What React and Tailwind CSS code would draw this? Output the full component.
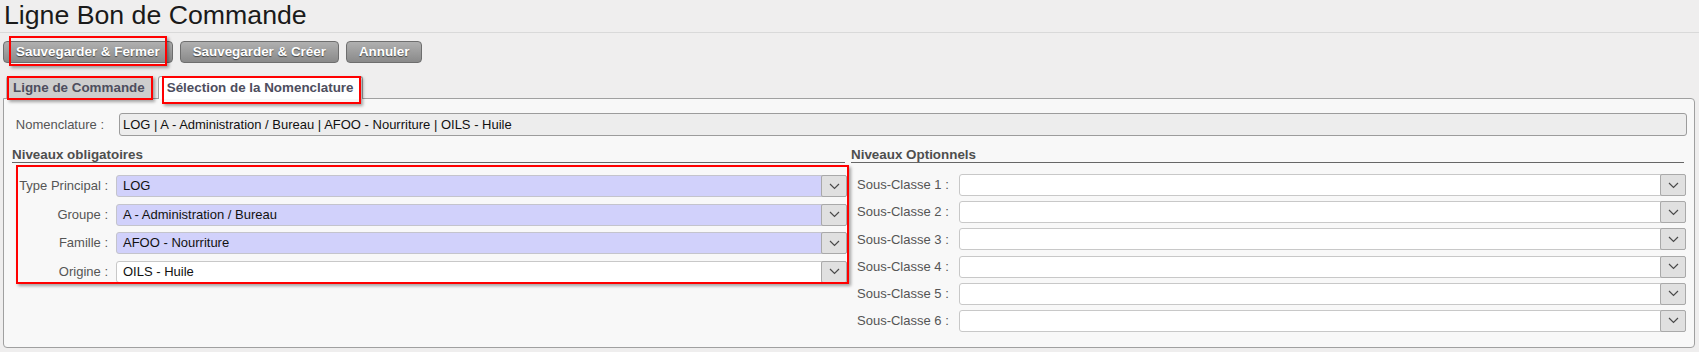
import React from "react";

const Chevron = () => (
  <svg width="11" height="7" viewBox="0 0 11 7" fill="none">
    <polyline points="1,1 5.5,5.5 10,1" stroke="#4a4a4a" strokeWidth="1.2" />
  </svg>
);

function Select({ value, blue }) {
  return (
    <div
      className={`flex flex-1 h-[22px] rounded-[3px] border ${
        blue ? "bg-[#d1d1fb] border-[#c4c4cc]" : "bg-white border-[#c8c8c8]"
      }`}
    >
      <div className="flex-1 pl-[6px] text-[13px] leading-[20px] text-[#111]">{value}</div>
      <div className="-my-px -mr-px w-[26px] flex items-center justify-center rounded-[2px] border border-[#a9a9a9] bg-[#e0e0e0]">
        <Chevron />
      </div>
    </div>
  );
}

const Btn = ({ children }) => (
  <button className="h-[22px] px-[12px] rounded-[4px] border border-[#6e6e6e] bg-gradient-to-b from-[#b0b0b0] to-[#8a8a8a] text-white font-bold text-[13.4px] leading-[20px] [text-shadow:0_1px_1px_rgba(0,0,0,0.55)]">
    {children}
  </button>
);

export default function App() {
  const left = [
    ["Type Principal :", "LOG", true],
    ["Groupe :", "A - Administration / Bureau", true],
    ["Famille :", "AFOO - Nourriture", true],
    ["Origine :", "OILS - Huile", false],
  ];
  const right = [1, 2, 3, 4, 5, 6];
  return (
    <div className="relative w-[1699px] h-[352px] overflow-hidden bg-[#efeeee] font-['Liberation_Sans',Arial,sans-serif]">
      {/* Title */}
      <div className="h-[33px] border-b border-[#d9d9d9] pl-[4px] text-[26.7px] leading-[30px] text-[#1a1a1a]">
        Ligne Bon de Commande
      </div>

      {/* Buttons */}
      <div className="mt-[8px] pl-[3px] flex gap-[7px]">
        <Btn>Sauvegarder &amp; Fermer</Btn>
        <Btn>Sauvegarder &amp; Créer</Btn>
        <Btn>Annuler</Btn>
      </div>

      {/* Tabs */}
      <div className="mt-[13px] pl-[6px] flex items-end gap-[6px] relative z-10">
        <div className="h-[22px] px-[6px] border border-[#b4b4b4] border-b-0 bg-[#cdcdcd] rounded-t-[3px] text-[13.4px] font-bold leading-[21px] text-[#4e4e5e]">
          Ligne de Commande
        </div>
        <div className="h-[23px] -mb-px px-[8px] border border-[#a0a0a0] border-b-0 bg-white rounded-t-[3px] text-[13.4px] font-bold leading-[21px] text-[#4e4e5e]">
          Sélection de la Nomenclature
        </div>
      </div>

      {/* Panel */}
      <div className="ml-[3px] w-[1692px] border border-[#a0a0a0] rounded-b-[4px] rounded-tr-[4px] bg-[#f8f8f8] pt-[14px] pb-[15px] pl-[8px] pr-[7px]">
        <div className="flex items-center h-[23px]">
          <div className="w-[96px] -ml-[4px] text-right text-[13px] text-[#555]">Nomenclature :</div>
          <div className="ml-[15px] flex-1 h-[23px] rounded-[3px] border border-[#9c9c9c] bg-[#ededed] pl-[3px] text-[13px] leading-[21px] text-[#111]">
            LOG | A - Administration / Bureau | AFOO - Nourriture | OILS - Huile
          </div>
        </div>

        <div className="mt-[11px] grid grid-cols-[835px_835px] gap-x-[4px]">
          <div>
            <div className="mr-[2px] border-b border-[#666] text-[13.4px] font-bold leading-[15px] text-[#4e4e4e]">
              Niveaux obligatoires
            </div>
            <div className="mt-[12px] flex flex-col gap-[6.5px]">
              {left.map(([label, value, blue]) => (
                <div key={label} className="flex items-center">
                  <div className="w-[96px] text-right text-[13px] text-[#555]">{label}</div>
                  <div className="ml-[8px] flex flex-1">
                    <Select value={value} blue={blue} />
                  </div>
                </div>
              ))}
            </div>
          </div>
          <div>
            <div className="mr-[2px] border-b border-[#666] text-[13.4px] font-bold leading-[15px] text-[#4e4e4e]">
              Niveaux Optionnels
            </div>
            <div className="mt-[11px] flex flex-col gap-[5.2px]">
              {right.map((n) => (
                <div key={n} className="flex items-center">
                  <div className="pl-[6px] w-[108px] text-[13px] text-[#555]">Sous-Classe {n} :</div>
                  <div className="flex flex-1">
                    <Select value="" blue={false} />
                  </div>
                </div>
              ))}
            </div>
          </div>
        </div>
      </div>

      {/* Red annotation boxes */}
      <div className="absolute left-[9px] top-[36px] w-[158px] h-[30px] border-2 border-[#ff0000] shadow-[2px_2px_3px_rgba(0,0,0,0.35)] z-20" />
      <div className="absolute left-[7px] top-[76px] w-[146px] h-[24px] border-2 border-[#ff0000] shadow-[2px_2px_3px_rgba(0,0,0,0.35)] z-20" />
      <div className="absolute left-[162px] top-[76px] w-[199px] h-[28px] border-2 border-[#ff0000] shadow-[2px_2px_3px_rgba(0,0,0,0.35)] z-20" />
      <div className="absolute left-[16px] top-[165px] w-[833px] h-[119px] border-2 border-[#ff0000] shadow-[2px_2px_3px_rgba(0,0,0,0.35)] z-20" />
    </div>
  );
}
